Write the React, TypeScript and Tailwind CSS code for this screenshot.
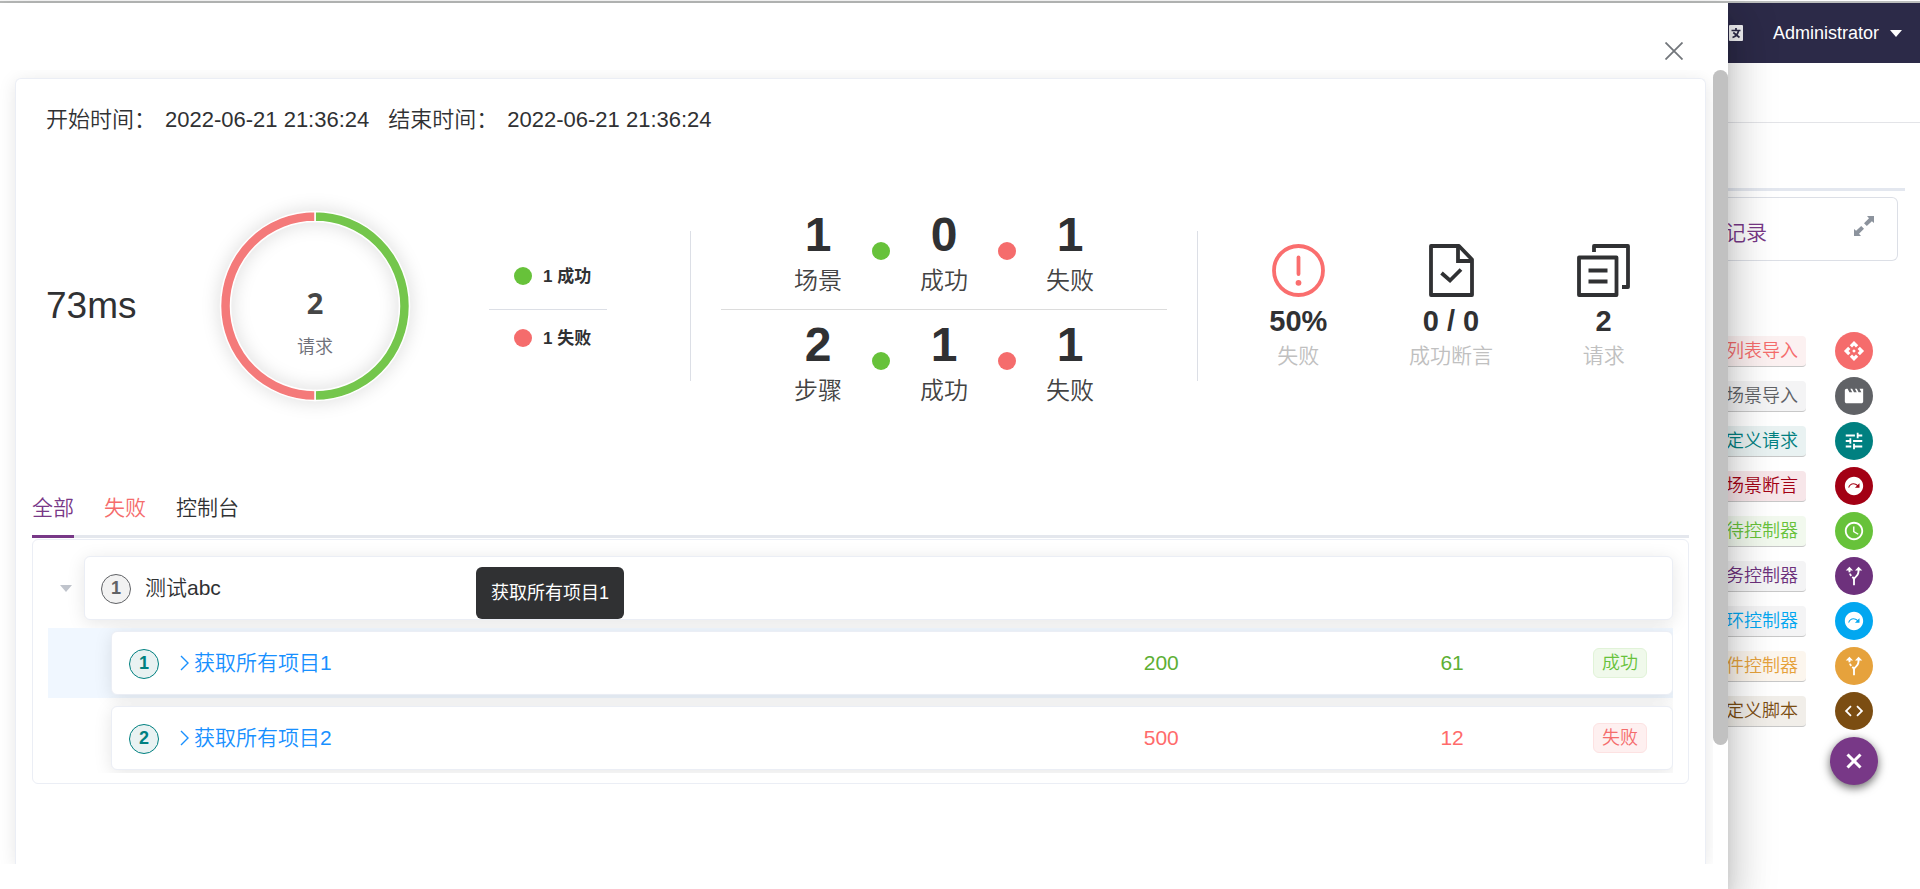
import React from "react";
import type { IconType } from "react-icons";
import {
  MdAccessTime,
  MdAltRoute,
  MdApi,
  MdCode,
  MdMovie,
  MdNextPlan,
  MdTune,
} from "react-icons/md";

type Action = { label: string; icon: IconType; circle: string; tag: string };

const actions: Action[] = [
  { label: "列表导入", icon: MdApi, circle: "bg-[#f56c6c]", tag: "bg-[#fcf1f1] text-[#f56c6c]" },
  { label: "场景导入", icon: MdMovie, circle: "bg-[#606266]", tag: "bg-[#f4f4f5] text-[#606266]" },
  { label: "定义请求", icon: MdTune, circle: "bg-[#008080]", tag: "bg-[#e9f2f2] text-[#008080]" },
  { label: "场景断言", icon: MdNextPlan, circle: "bg-[#a30014]", tag: "bg-[#f7e6e9] text-[#a30014]" },
  { label: "待控制器", icon: MdAccessTime, circle: "bg-[#67c23a]", tag: "bg-[#f2f9ee] text-[#67c23a]" },
  { label: "务控制器", icon: MdAltRoute, circle: "bg-[#6d317c]", tag: "bg-[#f4f4f5] text-[#6d317c]" },
  { label: "环控制器", icon: MdNextPlan, circle: "bg-[#02a7f0]", tag: "bg-[#f4f4f5] text-[#02a7f0]" },
  { label: "件控制器", icon: MdAltRoute, circle: "bg-[#e6a23c]", tag: "bg-[#fcf6ee] text-[#e6a23c]" },
  { label: "定义脚本", icon: MdCode, circle: "bg-[#7b4d12]", tag: "bg-[#f1eee9] text-[#7b4d12]" },
];

const counts = [
  { total: 1, label: "场景", passed: 0, failed: 1 },
  { total: 2, label: "步骤", passed: 1, failed: 1 },
];

const steps = [
  { index: 1, name: "获取所有项目1", code: 200, time: 61, ok: true },
  { index: 2, name: "获取所有项目2", code: 500, time: 12, ok: false },
];

const cardShadow = "shadow-[0_3px_18px_rgba(0,0,0,0.1)]";

function Donut() {
  return (
    <div className="grid h-[230px] w-[230px] place-items-center">
      <svg viewBox="0 0 230 230" className="col-start-1 row-start-1 h-full w-full" aria-hidden="true">
        <g style={{ filter: "drop-shadow(0 0 9px rgba(0,0,0,0.16))" }}>
          <path d="M115 20.500 A94.500 94.500 0 0 1 115 209.500 V199.500 A84.500 84.500 0 0 0 115 30.500 Z" fill="#74c64c" stroke="#fff" strokeWidth="1.5" />
          <path d="M115 209.500 A94.500 94.500 0 0 1 115 20.500 V30.500 A84.500 84.500 0 0 0 115 199.500 Z" fill="#f47a7a" stroke="#fff" strokeWidth="1.5" />
        </g>
      </svg>
      <div className="col-start-1 row-start-1 flex flex-col items-center pt-[38px]">
        <strong className="font-['Open_Sans',sans-serif] text-[29px] leading-[44px] font-bold text-[#464646]">2</strong>
        <span className="text-[18px] leading-[44px] text-[#6e7079]">请求</span>
      </div>
    </div>
  );
}

function Count({ value, label }: { value: number; label: string }) {
  return (
    <div className="flex w-[108px] flex-col items-center">
      <strong className="text-[48px] leading-[60px] font-bold text-[#303133]">{value}</strong>
      <span className="text-[24px] leading-[32px] text-[#434343]">{label}</span>
    </div>
  );
}

function Dot({ color }: { color: string }) {
  return <span className={`h-[18px] w-[18px] shrink-0 rounded-full ${color}`} />;
}

function Stat({ value, label, children }: { value: string; label: string; children: React.ReactNode }) {
  return (
    <div className="flex flex-1 flex-col items-center">
      {children}
      <strong className="mt-[9px] text-[29px] leading-[30px] font-bold text-[#303133]">{value}</strong>
      <span className="text-[21px] leading-[40px] text-[#c0c0c0]">{label}</span>
    </div>
  );
}

function Summary() {
  return (
    <section className="grid h-[296px] grid-cols-[minmax(0,644fr)_1px_minmax(0,506fr)_1px_minmax(0,491fr)] items-center pl-[14px]">
      <div className="flex items-center">
        <div className="w-[154px] text-[37px] text-[#303133]">73ms</div>
        <Donut />
        <div className="ml-[59px] w-[118px] pt-px text-[17px] font-bold text-[#303133]">
          <div className="flex h-[30px] items-center gap-[11px] pl-[25px]">
            <Dot color="bg-[#67c23a]" />
            <span className="pt-[2px]">1 成功</span>
          </div>
          <hr className="mt-[18px] mb-[13px] border-[#dcdfe6]" />
          <div className="flex h-[30px] items-center gap-[11px] pl-[25px]">
            <Dot color="bg-[#f56c6c]" />
            <span className="pt-[2px]">1 失败</span>
          </div>
        </div>
      </div>
      <div className="h-[150px] bg-[#dcdfe6]" />
      <div className="px-[30px]">
        {counts.map((row, i) => (
          <React.Fragment key={row.label}>
            {i > 0 && <hr className="mt-3 mb-[5px] border-[#dcdcdc]" />}
            <div className="flex items-center justify-center">
              <Count value={row.total} label={row.label} />
              <Dot color="bg-[#67c23a]" />
              <Count value={row.passed} label="成功" />
              <Dot color="bg-[#f56c6c]" />
              <Count value={row.failed} label="失败" />
            </div>
          </React.Fragment>
        ))}
      </div>
      <div className="h-[150px] bg-[#dcdfe6]" />
      <div className="flex pt-2 pr-[9px] pl-[24px]">
        <Stat value="50%" label="失败">
          <svg viewBox="0 0 53 53" className="h-[53px] w-[53px]" fill="none" stroke="#fa6e6e" strokeWidth="3.8" aria-hidden="true">
            <circle cx="26.5" cy="26.5" r="24.5" />
            <path d="M26.500 13.500V30" strokeLinecap="round" />
            <circle cx="26.5" cy="38.8" r="2.9" fill="#fa6e6e" stroke="none" />
          </svg>
        </Stat>
        <Stat value="0 / 0" label="成功断言">
          <svg viewBox="0 0 53 53" className="h-[53px] w-[53px]" fill="none" stroke="#303133" strokeWidth="3.8" strokeLinejoin="round" aria-hidden="true">
            <path d="M6 2H34L47 15.500V51H6Z" />
            <path d="M33 2.500V17H47" strokeLinejoin="miter" />
            <path d="M16.500 29L25 36.500L36 25.500" strokeLinejoin="miter" />
          </svg>
        </Stat>
        <Stat value="2" label="请求">
          <svg viewBox="0 0 53 53" className="h-[53px] w-[53px]" fill="none" stroke="#303133" strokeWidth="3.8" strokeLinejoin="round" aria-hidden="true">
            <path d="M2 13.500H39.500V51H2Z" />
            <path d="M17 8V2H51V43H45" />
            <path d="M11.500 26.500H30.500M11.500 37.500H30.500" />
          </svg>
        </Stat>
      </div>
    </section>
  );
}

function StepCard({ step, active }: { step: (typeof steps)[number]; active: boolean }) {
  return (
    <div className={`pt-[3px] pb-[3px] pl-[63px] ${active ? "bg-[#f0f7ff]" : ""}`}>
      <div className={`flex h-[64px] items-center rounded-md border border-[#ebeef5] bg-white pr-[25px] pl-[17px] text-[21px] ${cardShadow}`}>
        <span className="mt-px grid h-[30px] w-[30px] shrink-0 place-items-center rounded-full border border-[#008080] bg-[#e9f2f2] text-[18px] font-bold text-[#008080]">
          {step.index}
        </span>
        <a href={`#step-${step.index}`} className="ml-[21px] flex flex-[958] items-center gap-[5px] text-[#1890ff]">
          <svg viewBox="0 0 9 16" className="h-4 w-[9px]" fill="none" stroke="currentColor" strokeWidth="1.4" aria-hidden="true">
            <path d="M1 1L8 8L1 15" />
          </svg>
          {step.name}
        </a>
        <span className={`w-[48px] text-center ${step.ok ? "text-[#5daf34]" : "text-[#ff6b6b]"}`}>{step.code}</span>
        <span className="flex-[243]" />
        <span className={`w-[48px] text-center ${step.ok ? "text-[#5daf34]" : "text-[#ff6b6b]"}`}>{step.time}</span>
        <span className="flex-[117]" />
        <span
          className={`flex h-[30px] w-[54px] items-center justify-center rounded-md border text-[18px] ${
            step.ok ? "border-[#e1f3d8] bg-[#f0f9eb] text-[#67c23a]" : "border-[#fde2e2] bg-[#fef0f0] text-[#f56c6c]"
          }`}
        >
          {step.ok ? "成功" : "失败"}
        </span>
      </div>
    </div>
  );
}

function Drawer() {
  return (
    <main className="relative z-10 flex w-[90%] flex-col bg-white shadow-[0_12px_15px_-7px_rgba(0,0,0,0.2),0_24px_36px_3px_rgba(0,0,0,0.14),0_9px_45px_8px_rgba(0,0,0,0.12)]">
      <div className="flex h-[67px] shrink-0 items-end justify-end pr-[44px] pb-[9px]">
        <button type="button" aria-label="关闭" className="p-px text-[#72767b]">
          <svg viewBox="0 0 18 18" className="h-[18px] w-[18px]" fill="none" stroke="currentColor" strokeWidth="1.8" aria-hidden="true">
            <path d="M.5.5L17.500 17.500M17.500.5L.5 17.500" />
          </svg>
        </button>
      </div>
      <div className="mb-[25px] flex min-h-0 flex-1">
        <div className="flex min-w-0 flex-1 flex-col overflow-hidden pt-2 pr-[7px] pl-[15px]">
          <div className={`flex-1 rounded-t-md border border-b-0 border-[#ebeef5] bg-white px-4 ${cardShadow}`}>
            <div className="flex h-[79px] items-center pt-px pl-[14px] text-[22px] text-[#303133]">
              <span className="w-[119px]">开始时间：</span>
              <time>2022-06-21 21:36:24</time>
              <span className="ml-[19px] w-[119px]">结束时间：</span>
              <time>2022-06-21 21:36:24</time>
            </div>
            <Summary />
            <div role="tablist" className="mt-[24px] flex gap-[30px] border-b-[3px] border-[#e4e7ed] text-[21px]">
              <button type="button" role="tab" aria-selected="true" className="-mb-[3px] h-[60px] border-b-[3px] border-[#783887] pt-[3px] text-[#783887]">
                全部
              </button>
              <button type="button" role="tab" aria-selected="false" className="h-[57px] pt-[3px] text-[#f56c6c]">
                失败
              </button>
              <button type="button" role="tab" aria-selected="false" className="h-[57px] pt-[3px] text-[#303133]">
                控制台
              </button>
            </div>
            <div className="mt-px rounded-md border border-[#ebeef5] px-[15px] pt-4 pb-[10px]">
              <div className="flex items-center">
                <button type="button" aria-label="收起" className="flex w-[36px] justify-center text-[#c0c4cc]">
                  <svg viewBox="0 0 12 7" className="h-[7px] w-3" fill="currentColor" aria-hidden="true">
                    <path d="M0 0H12L6 7Z" />
                  </svg>
                </button>
                <div className={`relative flex h-[64px] flex-1 items-center rounded-md border border-[#ebeef5] bg-white pl-4 text-[21px] text-[#303133] ${cardShadow}`}>
                  <span className="mt-px grid h-[30px] w-[30px] place-items-center rounded-full border border-[#606266] bg-[#f2f2f2] text-[18px] font-bold text-[#606266]">
                    1
                  </span>
                  <span className="ml-[14px]">测试abc</span>
                  <div role="tooltip" className="absolute bottom-0 left-[391px] flex h-[52px] w-[148px] items-center justify-center rounded-md bg-[#303133] text-[18px] font-normal text-white">
                    获取所有项目1
                  </div>
                </div>
              </div>
              <div className="relative flex flex-col gap-[5px] overflow-hidden pt-2">
                {steps.map((step) => (
                  <StepCard key={step.index} step={step} active={step.index === 1} />
                ))}
              </div>
            </div>
          </div>
        </div>
        <div className="w-[15px] shrink-0">
          <div className="h-[85%] rounded-full bg-[#c1c1c1]" />
        </div>
      </div>
    </main>
  );
}

function Background() {
  return (
    <aside className="min-w-0 flex-1">
      <header className="flex h-[60px] items-center bg-[#2c2a48] text-[18px] text-white">
        <svg viewBox="0 0 15 16" className="h-4 w-[15px]" aria-hidden="true">
          <rect x="1" width="14" height="16" rx="1" fill="#f2f2f4" />
          <path d="M3.500 5.500H12.500M8 3V5.500M5.300 7.500L11.500 12.500M10.500 6C9.800 9 7.500 11.500 4.500 12.500" fill="none" stroke="#2c2a48" strokeWidth="1.7" />
        </svg>
        <button type="button" className="ml-[30px] flex items-center gap-[11px]">
          Administrator
          <svg viewBox="0 0 12 7" className="h-[7px] w-3" fill="currentColor" aria-hidden="true">
            <path d="M0 0H12L6 7Z" />
          </svg>
        </button>
      </header>
      <div className="h-[60px] border-b border-[#e3e4e8]" />
      <div className="mr-[15px] h-[68px] border-b-[3px] border-[#e3e7ef]" />
      <div className="mt-[6px] mr-[22px] flex h-[64px] items-center justify-between rounded-r-md border border-l-0 border-[#dcdfe6] pr-[23px]">
        <span className="-ml-[3px] pt-2 text-[21px] text-[#783887]">记录</span>
        <button type="button" aria-label="全屏" className="mb-[6px] text-[#8c939d]">
          <svg viewBox="0 0 20 20" className="h-5 w-5" fill="currentColor" aria-hidden="true">
            <path d="M13 0H20V7L17.900 5.200L12.800 10L10 7.200L15 2.200ZM7 20H0V13L2.100 14.800L7.200 10L10 12.800L5 17.800Z" />
          </svg>
        </button>
      </div>
      <div className="flex flex-col gap-[7px] pt-[71px] pr-[47px]">
        {actions.map(({ label, icon: Icon, circle, tag }) => (
          <button key={label} type="button" className="flex h-[38px] items-center justify-between">
            <span className={`-ml-[10px] flex h-[31px] items-center rounded border-b border-[#c8c8c8] px-2 pt-[2px] text-[18px] ${tag}`}>{label}</span>
            <span className={`grid h-[38px] w-[38px] place-items-center rounded-full text-white ${circle}`}>
              <Icon size={22} />
            </span>
          </button>
        ))}
        <button
          type="button"
          aria-label="收起菜单"
          className="-mr-[5px] grid h-12 w-12 place-items-center self-end rounded-full bg-[#783887] text-white shadow-[0_3px_10px_rgba(0,0,0,0.6)]"
        >
          <svg viewBox="0 0 16 16" className="h-4 w-4" fill="none" stroke="currentColor" strokeWidth="3" aria-hidden="true">
            <path d="M1.500 1.500L14.500 14.500M14.500 1.500L1.500 14.500" />
          </svg>
        </button>
      </div>
    </aside>
  );
}

export default function App() {
  return (
    <div className="h-screen overflow-hidden bg-white pt-px font-['Liberation_Sans','Noto_Sans_CJK_SC',sans-serif] font-[350]">
      <div className="flex h-full flex-col border-t-2 border-[#bdbfbe]">
        <div className="flex min-h-0 flex-1">
          <Drawer />
          <Background />
        </div>
      </div>
    </div>
  );
}
